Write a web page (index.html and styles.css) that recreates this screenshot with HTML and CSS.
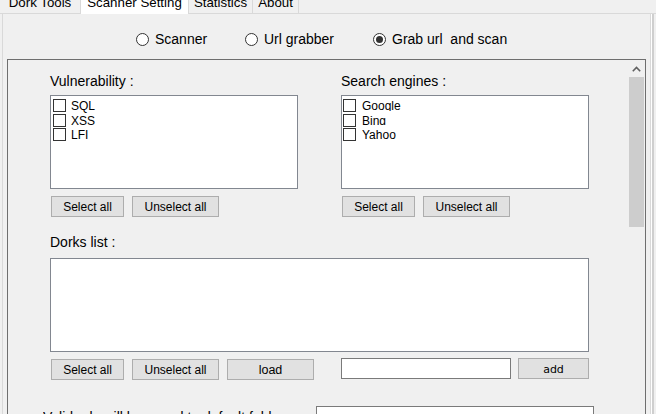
FILE: index.html
```html
<!DOCTYPE html>
<html>
<head>
<meta charset="utf-8">
<link rel="stylesheet" href="styles.css">
</head>
<body>
<div class="window">
  <div class="tabstrip">
    <div class="tab t1">Dork Tools</div>
    <div class="tab t2 sel">Scanner Setting</div>
    <div class="tab t3">Statistics</div>
    <div class="tab t4">About</div>
  </div>
  <div class="page">
    <div class="modes">
      <div class="radio r1"><span class="dot"></span><span>Scanner</span></div>
      <div class="radio r2"><span class="dot"></span><span>Url grabber</span></div>
      <div class="radio r3"><span class="dot on"></span><span>Grab url&nbsp; and scan</span></div>
    </div>
    <div class="panel">
      <div class="pcontent">
        <div class="row1">
          <div class="col c1">
            <div class="lbl">Vulnerability :</div>
            <div class="list">
              <div class="item"><span class="cb"></span><span>SQL</span></div>
              <div class="item"><span class="cb"></span><span>XSS</span></div>
              <div class="item"><span class="cb"></span><span>LFI</span></div>
            </div>
            <div class="btns">
              <div class="btn w73">Select all</div>
              <div class="btn w87">Unselect all</div>
            </div>
          </div>
          <div class="col c2">
            <div class="lbl">Search engines :</div>
            <div class="list elist">
              <div class="item"><span class="cb"></span><span class="clip">Google</span></div>
              <div class="item"><span class="cb"></span><span class="clip">Bing</span></div>
              <div class="item"><span class="cb"></span><span class="clip">Yahoo</span></div>
            </div>
            <div class="btns">
              <div class="btn w73">Select all</div>
              <div class="btn w87">Unselect all</div>
            </div>
          </div>
        </div>
        <div class="lbl dorks">Dorks list :</div>
        <div class="dbox"></div>
        <div class="row2">
          <div class="btns2">
            <div class="btn w73">Select all</div>
            <div class="btn w87">Unselect all</div>
            <div class="btn w87 load">load</div>
          </div>
          <div class="tbox addbox"></div>
          <div class="btn add">add</div>
        </div>
        <div class="row3">
          <div class="lbl savelbl">Valid urls will be saved to default folder :</div>
          <div class="tbox savebox"></div>
        </div>
      </div>
      <div class="vscroll">
        <div class="up">
          <svg width="9" height="6" viewBox="0 0 9 6"><polyline points="0.8,5.2 4.5,1.5 8.2,5.2" fill="none" stroke="#606060" stroke-width="1.6"/></svg>
        </div>
        <div class="thumb"></div>
      </div>
    </div>
  </div>
</div>
</body>
</html>
```

FILE: styles.css
```css
html, body {
  margin: 0;
  padding: 0;
}
body {
  width: 656px;
  height: 414px;
  overflow: hidden;
  background: #f0f0f0;
  font-family: "Liberation Sans", Arial, sans-serif;
  color: #000;
}
.window {
  display: flex;
  flex-direction: column;
  height: 414px;
}
.tabstrip {
  display: flex;
  align-items: flex-end;
  height: 13px;
  border-bottom: 1px solid #d9d9d9;
  font-size: 13.3px;
  line-height: 14px;
  flex: none;
}
.tab {
  height: 17px;
  box-sizing: border-box;
  text-align: center;
  background: #f0f0f0;
  border-right: 1px solid #d9d9d9;
  white-space: nowrap;
}
.t1 { width: 81px; }
.t2 { width: 108px; }
.t3 { width: 64px; }
.t4 { width: 46px; }
.sel {
  background: #fff;
  height: 18px;
  margin-bottom: -1px;
}
.page {
  flex: 1;
  min-height: 0;
  margin: 0 5px 0 2px;
  border-left: 1px solid #d9d9d9;
  border-right: 1px solid #d9d9d9;
  display: flex;
  flex-direction: column;
  box-shadow: 1px 0 0 #fff, 3px 0 0 #cfcfcf;
}
.modes {
  display: flex;
  margin-top: 17px;
  padding-left: 133px;
  font-size: 14px;
  line-height: 16px;
  height: 16px;
  flex: none;
}
.radio {
  display: flex;
  align-items: center;
  gap: 6px;
  white-space: nowrap;
}
.r1 { width: 109px; }
.r2 { width: 128px; }
.dot {
  width: 13px;
  height: 13px;
  box-sizing: border-box;
  border: 1px solid #333;
  border-radius: 50%;
  background: #fff;
  display: flex;
  align-items: center;
  justify-content: center;
  flex: none;
}
.dot.on::after {
  content: "";
  width: 7px;
  height: 7px;
  border-radius: 50%;
  background: #333;
}
.panel {
  flex: 1;
  min-height: 0;
  margin: 12px 4px 0;
  border: 1px solid #6e6e6e;
  border-bottom: none;
  display: flex;
  overflow: hidden;
}
.pcontent {
  flex: 1;
  padding: 13px 0 0 42px;
}
.vscroll {
  width: 17px;
  flex: none;
  display: flex;
  flex-direction: column;
  background: #f0f0f0;
}
.up {
  height: 17px;
  display: flex;
  justify-content: center;
  align-items: center;
}
.thumb {
  height: 150px;
  margin: 0 1px;
  background: #cdcdcd;
}
.row1 {
  display: flex;
}
.c1 { width: 291px; }
.c2 { width: 248px; }
.lbl {
  font-size: 14px;
  line-height: 16px;
  height: 16px;
  white-space: nowrap;
}
.list {
  margin-top: 6px;
  width: 248px;
  height: 94px;
  box-sizing: border-box;
  border: 1px solid #828790;
  background: #fff;
  padding: 3px 2px;
}
.elist {
  padding-left: 1px;
}
.item {
  display: flex;
  height: 14.5px;
  font-size: 12px;
  line-height: 14.5px;
  white-space: nowrap;
}
.cb {
  width: 13px;
  height: 13px;
  box-sizing: border-box;
  border: 1px solid #333;
  background: #fff;
  margin-right: 5px;
  flex: none;
}
.elist .cb {
  margin-right: 6px;
}
.clip {
  display: inline-block;
  height: 11.6px;
  overflow: hidden;
}
.btns {
  display: flex;
  gap: 8px;
  margin-top: 7px;
  padding-left: 1px;
}
.btn {
  height: 21px;
  box-sizing: border-box;
  border: 1px solid #adadad;
  background: #e1e1e1;
  font-size: 12px;
  padding-top: 1px;
  line-height: 19px;
  text-align: center;
  white-space: nowrap;
  overflow: hidden;
}
.w73 { width: 73px; }
.w87 { width: 87px; }
.load { font-size: 12.5px; }
.dorks {
  margin-top: 17px;
}
.dbox {
  margin-top: 8px;
  width: 539px;
  height: 94px;
  box-sizing: border-box;
  border: 1px solid #828790;
  background: #fff;
}
.row2 {
  display: flex;
  align-items: flex-start;
  margin-top: 6px;
}
.btns2 {
  display: flex;
  gap: 8px;
  padding-left: 1px;
  margin-top: 1px;
}
.tbox {
  height: 21px;
  box-sizing: border-box;
  border: 1px solid #7a7a7a;
  background: #fff;
}
.addbox {
  width: 170px;
  margin-left: 27px;
}
.add {
  width: 71px;
  margin-left: 7px;
  font-family: "DejaVu Sans", sans-serif;
  font-size: 11px;
}
.row3 {
  display: flex;
  align-items: flex-start;
  margin-top: 26px;
}
.savelbl {
  width: 273px;
  margin-left: -7px;
  margin-top: 3px;
  overflow: hidden;
}
.savebox {
  width: 278px;
}
```
